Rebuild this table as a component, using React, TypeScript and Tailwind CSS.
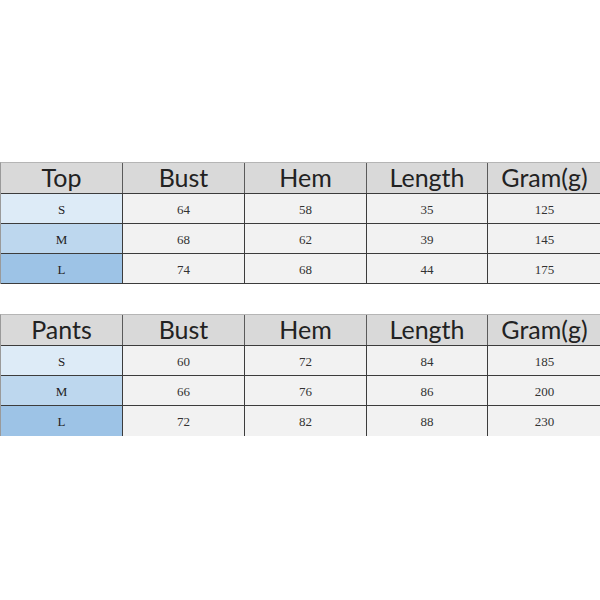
const cols = 'grid grid-cols-[122px_122px_122px_121px_113px]';

const sizeBg: Record<string, string> = {
  S: 'bg-[#ddebf7]',
  M: 'bg-[#bdd7ee]',
  L: 'bg-[#9dc3e6]',
};

type Row = { size: string; values: string[] };

const topRows: Row[] = [
  { size: 'S', values: ['64', '58', '35', '125'] },
  { size: 'M', values: ['68', '62', '39', '145'] },
  { size: 'L', values: ['74', '68', '44', '175'] },
];

const pantsRows: Row[] = [
  { size: 'S', values: ['60', '72', '84', '185'] },
  { size: 'M', values: ['66', '76', '86', '200'] },
  { size: 'L', values: ['72', '82', '88', '230'] },
];

function SizeTable({ title, rows, lastBorder }: { title: string; rows: Row[]; lastBorder: boolean }) {
  const headers = [title, 'Bust', 'Hem', 'Length', 'Gram(g)'];
  return (
    <div className="border-t border-[#b5b5b5] border-l border-l-[#9a9a9a]">
      {/* Header */}
      <div className={`${cols} h-[31px] bg-[#d9d9d9] border-b border-[#3c3c3c]`}>
        {headers.map((h, i) => (
          <div
            key={h}
            className={`flex items-end justify-center pb-[3px] text-[25px] leading-none text-[#222] font-['Lato','Liberation_Sans',sans-serif] ${i < 4 ? 'border-r border-[#5a5a5a]' : ''}`}
          >
            {h}
          </div>
        ))}
      </div>
      {/* Rows */}
      {rows.map((r, ri) => (
        <div
          key={r.size}
          className={`${cols} h-[30px] ${ri < rows.length - 1 || lastBorder ? 'border-b border-[#3c3c3c]' : ''}`}
        >
          <div className={`${sizeBg[r.size]} border-r border-[#3c3c3c] flex items-center justify-center pt-[2px] text-[13px] text-[#222] font-['Liberation_Serif',serif]`}>
            {r.size}
          </div>
          {r.values.map((v, vi) => (
            <div
              key={vi}
              className={`bg-[#f2f2f2] flex items-center justify-center pt-[2px] text-[13px] text-[#333] font-['Liberation_Serif',serif] ${vi < 3 ? 'border-r border-[#3c3c3c]' : ''}`}
            >
              {v}
            </div>
          ))}
        </div>
      ))}
    </div>
  );
}

export default function App() {
  return (
    <div className="w-[600px] h-[600px] bg-white overflow-hidden pt-[162px]">
      <SizeTable title="Top" rows={topRows} lastBorder />
      <div className="h-[30px]" />
      <SizeTable title="Pants" rows={pantsRows} lastBorder={false} />
    </div>
  );
}
